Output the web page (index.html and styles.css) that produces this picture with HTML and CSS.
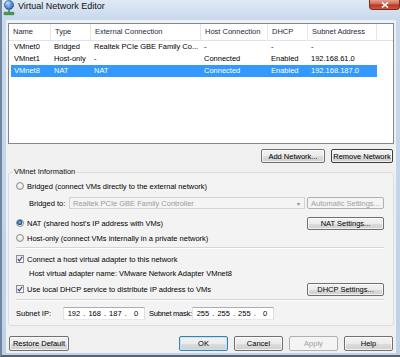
FILE: index.html
```html
<!DOCTYPE html>
<html lang="en">
<head>
    <meta charset="UTF-8">
    <meta name="viewport" content="width=device-width, initial-scale=1.0">
    <title>Virtual Network Editor</title>
    <link rel="stylesheet" href="styles.css">
</head>
<body>
    <div class="window">
        <div class="titlebar">
            <svg class="app-icon" width="12" height="16" viewBox="0 0 12 16">
                <defs>
                    <radialGradient id="globe" cx="0.35" cy="0.3" r="0.75">
                        <stop offset="0" stop-color="#cfe6ff"/>
                        <stop offset="0.45" stop-color="#4f8fd6"/>
                        <stop offset="1" stop-color="#1b4f94"/>
                    </radialGradient>
                </defs>
                <circle cx="6" cy="5" r="4.6" fill="url(#globe)" stroke="#24548f" stroke-width="0.6"/>
                <path d="M2 5h8M6 0.6v8.8M3 2.6q3 1.6 6 0M3 7.4q3-1.6 6 0" stroke="#a9cdf2" stroke-width="0.5" fill="none"/>
                <rect x="5.4" y="9.6" width="1.2" height="2.6" fill="#355a80"/>
                <rect x="1" y="12.2" width="10" height="2.6" rx="0.6" fill="#3f9a3c" stroke="#2b6c2a" stroke-width="0.5"/>
            </svg>
            <span class="title">Virtual Network Editor</span>
            <div class="close-btn">
                <svg width="8" height="6" viewBox="0 0 8 6">
                    <path d="M1 0.5l6 5M7 0.5l-6 5" stroke="#fff" stroke-width="1.6"/>
                </svg>
            </div>
        </div>

        <div class="client">
            <div class="netlist">
                <div class="list-head">
                    <div>Name</div>
                    <div>Type</div>
                    <div>External Connection</div>
                    <div>Host Connection</div>
                    <div>DHCP</div>
                    <div>Subnet Address</div>
                    <div class="head-fill"></div>
                </div>
                <div class="list-row">
                    <div>VMnet0</div>
                    <div>Bridged</div>
                    <div>Realtek PCIe GBE Family Co...</div>
                    <div>-</div>
                    <div>-</div>
                    <div>-</div>
                </div>
                <div class="list-row">
                    <div>VMnet1</div>
                    <div>Host-only</div>
                    <div>-</div>
                    <div>Connected</div>
                    <div>Enabled</div>
                    <div>192.168.61.0</div>
                </div>
                <div class="list-row selected">
                    <div>VMnet8</div>
                    <div>NAT</div>
                    <div>NAT</div>
                    <div>Connected</div>
                    <div>Enabled</div>
                    <div>192.168.187.0</div>
                </div>
            </div>

            <div class="list-actions">
                <button class="btn btn-add">Add Network...</button>
                <button class="btn btn-remove">Remove Network</button>
            </div>

            <fieldset class="info">
                <legend>VMnet Information</legend>

                <div class="opt opt-first">
                    <span class="radio"></span>
                    <span>Bridged (connect VMs directly to the external network)</span>
                </div>

                <div class="opt opt-bridge">
                    <span class="sub-label">Bridged to:</span>
                    <div class="combo">
                        <span>Realtek PCIe GBE Family Controller</span>
                        <span class="combo-arrow">&#9662;</span>
                    </div>
                    <button class="btn btn-side" disabled>Automatic Settings...</button>
                </div>

                <div class="opt opt-nat">
                    <span class="radio checked"></span>
                    <span>NAT (shared host's IP address with VMs)</span>
                    <button class="btn btn-side">NAT Settings...</button>
                </div>

                <div class="opt">
                    <span class="radio"></span>
                    <span>Host-only (connect VMs internally in a private network)</span>
                </div>

                <div class="sep"></div>

                <div class="opt opt-check">
                    <span class="check">
                        <svg width="6" height="6" viewBox="0 0 6 6"><path d="M0.8 3.2l1.5 1.7 3-4.2" stroke="#2c3f86" stroke-width="1.1" fill="none"/></svg>
                    </span>
                    <span>Connect a host virtual adapter to this network</span>
                </div>

                <div class="opt">
                    <span class="sub-text">Host virtual adapter name: VMware Network Adapter VMnet8</span>
                </div>

                <div class="opt opt-dhcp">
                    <span class="check">
                        <svg width="6" height="6" viewBox="0 0 6 6"><path d="M0.8 3.2l1.5 1.7 3-4.2" stroke="#2c3f86" stroke-width="1.1" fill="none"/></svg>
                    </span>
                    <span>Use local DHCP service to distribute IP address to VMs</span>
                    <button class="btn btn-side">DHCP Settings...</button>
                </div>

                <div class="sep sep-low"></div>

                <div class="opt opt-subnet">
                    <span class="ip-label">Subnet IP:</span>
                    <div class="ipbox">
                        <span class="oct">192</span><span class="dot">.</span>
                        <span class="oct">168</span><span class="dot">.</span>
                        <span class="oct">187</span><span class="dot">.</span>
                        <span class="oct">0</span>
                    </div>
                    <span class="mask-label">Subnet mask:</span>
                    <div class="ipbox">
                        <span class="oct">255</span><span class="dot">.</span>
                        <span class="oct">255</span><span class="dot">.</span>
                        <span class="oct">255</span><span class="dot">.</span>
                        <span class="oct">0</span>
                    </div>
                </div>
            </fieldset>

            <div class="dialog-actions">
                <button class="btn btn-restore">Restore Default</button>
                <button class="btn btn-main btn-ok">OK</button>
                <button class="btn btn-main">Cancel</button>
                <button class="btn btn-main" disabled>Apply</button>
                <button class="btn btn-main">Help</button>
            </div>
        </div>
    </div>
</body>
</html>
```

FILE: styles.css
```css
* {
    margin: 0;
    padding: 0;
    box-sizing: border-box;
}

body {
    width: 400px;
    height: 357px;
    overflow: hidden;
    font-family: 'Liberation Sans', Arial, sans-serif;
    font-size: 7.5px;
    color: #000;
    background: #bcd0e7;
}

.window {
    width: 400px;
    height: 357px;
    display: flex;
    flex-direction: column;
    padding: 0 4px 2px 4px;
    background: linear-gradient(#dfe9f5 0%, #c8d9ed 20px, #bed1e7 100%);
    border-left: 2px solid #71879f;
    border-bottom: 2px solid #596370;
}

/* title bar */
.titlebar {
    height: 20px;
    display: flex;
    align-items: flex-start;
}

.app-icon {
    margin-left: -3px;
}

.title {
    margin-left: 3px;
    margin-top: 1px;
    font-size: 9px;
    line-height: 10px;
    color: #111;
}

.close-btn {
    margin-left: auto;
    margin-right: -4px;
    width: 31px;
    height: 10px;
    border: 1px solid #7a2a20;
    border-top: none;
    border-radius: 0 0 4px 4px;
    background: linear-gradient(#e2a191 0%, #cf6a55 45%, #b8361e 55%, #d0583b 100%);
    display: flex;
    justify-content: center;
    align-items: center;
}

/* client area */
.client {
    flex: 1;
    background: #f0f0f0;
    padding: 3px 2px 0 2px;
    display: flex;
    flex-direction: column;
}

.netlist {
    height: 121px;
    border: 1px solid #828790;
    background: #fff;
}

.list-head {
    display: grid;
    grid-template-columns: 42px 40px 110px 67px 40px 69px 1fr;
    height: 17px;
    border-bottom: 1px solid #e0e4ea;
    color: #1e2a3a;
}

.list-head div {
    border-right: 1px solid #e3e6ea;
    padding-left: 4px;
    line-height: 16px;
    white-space: nowrap;
}

.list-head .head-fill {
    border-right: none;
}

.list-row {
    display: grid;
    grid-template-columns: 40px 40px 110px 67px 40px 69px;
    width: 366px;
    margin-left: 2px;
    height: 12px;
    line-height: 12px;
}

.list-row div {
    padding-left: 3px;
    white-space: nowrap;
    overflow: hidden;
}

.list-row.selected {
    background: #3399ff;
    color: #fff;
}

/* buttons */
.btn {
    height: 14px;
    border: 1px solid #707070;
    border-radius: 2px;
    background: linear-gradient(#f2f2f2 0%, #ebebeb 50%, #dddddd 51%, #cfcfcf 100%);
    box-shadow: inset 0 0 0 1px rgba(255, 255, 255, 0.7);
    font-family: inherit;
    font-size: 7.5px;
    color: #000;
    text-align: center;
    white-space: nowrap;
}

.btn:disabled {
    border-color: #adb2b5;
    background: #f4f4f4;
    box-shadow: none;
    color: #a0a0a0;
}

.list-actions {
    display: flex;
    justify-content: flex-end;
    gap: 6px;
    margin-top: 5px;
    padding-right: 1px;
}

.btn-add {
    width: 64px;
}

.btn-remove {
    width: 62px;
    border-color: #3c3c3c;
}

/* VMnet information group */
.info {
    margin-top: 4px;
    border: 1px solid #d5dfe5;
    border-radius: 3px;
    padding: 0 9px 5px 7px;
    background: #f3f3f3;
    display: flex;
    flex-direction: column;
}

.info legend {
    margin-left: -3px;
    padding: 0 1px;
    line-height: 10px;
    color: #111;
}

.opt {
    display: flex;
    align-items: center;
    height: 14px;
    white-space: nowrap;
}

.opt-first {
    margin-top: 2px;
}

.opt-bridge {
    margin-top: 3px;
    padding-left: 13px;
}

.opt-nat {
    margin-top: 6px;
    margin-bottom: 1px;
}

.opt-check {
    margin-top: 3px;
}

.opt-dhcp {
    margin-top: 2px;
}

.opt-subnet {
    margin-top: 5px;
}

.radio {
    width: 8px;
    height: 8px;
    margin-right: 3px;
    border: 1px solid #8e8f8f;
    border-radius: 50%;
    background: radial-gradient(circle at 50% 40%, #ffffff 0%, #e6e6e6 55%, #cfcfcf 100%);
    flex-shrink: 0;
}

.radio.checked {
    background: radial-gradient(circle at 45% 40%, #8fc3f0 0px, #1f5ea6 2px, #20568f 2.6px, #f2f2f2 3px, #d8d8d8 100%);
}

.check {
    width: 8px;
    height: 8px;
    margin-right: 3px;
    border: 1px solid #8e8f8f;
    background: linear-gradient(135deg, #e3e3e3, #ffffff);
    display: flex;
    align-items: center;
    justify-content: center;
    flex-shrink: 0;
}

.sub-label {
    width: 40px;
}

.sub-text {
    padding-left: 13px;
}

.combo {
    width: 236px;
    height: 12px;
    border: 1px solid #d0d3d8;
    background: #f4f4f4;
    color: #9a9a9a;
    display: flex;
    align-items: center;
    padding: 0 4px 0 3px;
}

.combo-arrow {
    margin-left: auto;
    font-size: 6px;
    color: #8a8a8a;
}

.btn-side {
    margin-left: auto;
    width: 77px;
    height: 13px;
}

.opt-bridge .btn-side {
    height: 12px;
}

.sep {
    height: 2px;
    margin-top: 2px;
    border-top: 1px solid #d5d5d5;
    border-bottom: 1px solid #fff;
}

.sep-low {
    margin-top: 3px;
}

.ip-label {
    width: 47px;
    flex-shrink: 0;
}

.mask-label {
    width: 43px;
    margin-left: 4px;
    letter-spacing: -0.25px;
    flex-shrink: 0;
}

.ipbox {
    width: 82px;
    height: 13px;
    border: 1px solid #abadb3;
    border-color: #abadb3 #dbdfe6 #e3e9ef #e2e3ea;
    background: #fff;
    display: flex;
    align-items: center;
    padding-left: 2px;
    flex-shrink: 0;
}

.oct {
    width: 16px;
    text-align: center;
}

.dot {
    width: 5px;
    text-align: center;
}

/* bottom buttons */
.dialog-actions {
    display: flex;
    gap: 6px;
    margin-top: 10px;
    padding: 0 1px;
}

.btn-restore {
    width: 60px;
    height: 15px;
    margin-right: auto;
}

.btn-main {
    width: 49px;
    height: 15px;
}

.btn-ok {
    border-color: #3c7fb1;
    box-shadow: inset 0 0 0 1px #bfe6f8;
}
```
